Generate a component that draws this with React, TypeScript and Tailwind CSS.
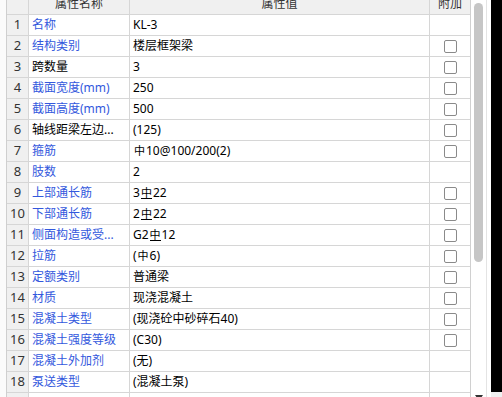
import React from "react";

type Row = { n: number; name: string; value: string; blue: boolean; check: boolean };

const rows: Row[] = [
  { n: 1, name: "名称", value: "KL-3", blue: true, check: false },
  { n: 2, name: "结构类别", value: "楼层框架梁", blue: true, check: true },
  { n: 3, name: "跨数量", value: "3", blue: false, check: true },
  { n: 4, name: "截面宽度(mm)", value: "250", blue: true, check: true },
  { n: 5, name: "截面高度(mm)", value: "500", blue: true, check: true },
  { n: 6, name: "轴线距梁左边...", value: "(125)", blue: false, check: true },
  { n: 7, name: "箍筋", value: "{A}10@100/200(2)", blue: true, check: true },
  { n: 8, name: "肢数", value: "2", blue: true, check: false },
  { n: 9, name: "上部通长筋", value: "3{C}22", blue: true, check: true },
  { n: 10, name: "下部通长筋", value: "2{C}22", blue: true, check: true },
  { n: 11, name: "侧面构造或受...", value: "G2{C}12", blue: true, check: true },
  { n: 12, name: "拉筋", value: "({A}6)", blue: true, check: true },
  { n: 13, name: "定额类别", value: "普通梁", blue: true, check: true },
  { n: 14, name: "材质", value: "现浇混凝土", blue: true, check: true },
  { n: 15, name: "混凝土类型", value: "(现浇砼中砂碎石40)", blue: true, check: true },
  { n: 16, name: "混凝土强度等级", value: "(C30)", blue: true, check: true },
  { n: 17, name: "混凝土外加剂", value: "(无)", blue: true, check: false },
  { n: 18, name: "泵送类型", value: "(混凝土泵)", blue: true, check: false },
];

// rebar grade symbols: A = HPB300, C = HRB400
function Value({ text }: { text: string }) {
  const parts = text.split(/(\{A\}|\{C\})/).filter(Boolean);
  return (
    <span className="whitespace-nowrap">
      {parts.map((p, i) => {
        if (p === "{A}") return <span key={i} className="mx-[1px] text-[11px]">中</span>;
        if (p === "{C}")
          return (
            <span key={i} className="mx-[1px] inline-block text-[11px] leading-[11px] border-b border-black">
              中
            </span>
          );
        return <span key={i}>{p}</span>;
      })}
    </span>
  );
}

function Checkbox() {
  return <div className="w-[13px] h-[13px] rounded-[2px] border border-[#8a8a8a] bg-white" />;
}

export default function App() {
  return (
    <div className="w-[502px] h-[397px] overflow-hidden flex bg-white text-[12px] text-black font-['Noto_Sans','Noto_Sans_CJK_SC',sans-serif]">
      {/* left strip */}
      <div className="w-[7px] h-full border-r border-[#cfcfcf] bg-[#fbfbfb]" />

      {/* grid */}
      <div className="w-[463px] h-full flex flex-col overflow-hidden">
        <div className="h-[15px] shrink-0 flex border-b border-[#d6d6d6] bg-[#f0f0f0] text-[#333] overflow-hidden">
          <div className="w-[22px] border-r border-[#d6d6d6]" />
          <div className="w-[101px] border-r border-[#d6d6d6] flex justify-center leading-[14px]">
            <span className="-translate-y-[3px]">属性名称</span>
          </div>
          <div className="w-[300px] border-r border-[#d6d6d6] flex justify-center leading-[14px]">
            <span className="-translate-y-[3px]">属性值</span>
          </div>
          <div className="w-[40px] flex justify-center leading-[14px]">
            <span className="-translate-y-[3px]">附加</span>
          </div>
        </div>

        {[...rows, { n: 19, name: "", value: "", blue: false, check: false }].map((r) => (
          <div key={r.n} className="h-[21px] shrink-0 flex border-b border-[#d6d6d6]">
            <div className="w-[22px] border-r border-[#d6d6d6] bg-[#f0f0f0] flex items-center justify-center text-[13px] text-[#333]">
              {r.n <= 18 ? r.n : ""}
            </div>
            <div
              className={
                "w-[101px] border-r border-[#d6d6d6] flex items-center pl-[3px] whitespace-nowrap overflow-hidden " +
                (r.blue ? "text-[#3358dd]" : "text-black")
              }
            >
              {r.name}
            </div>
            <div className="w-[300px] border-r border-[#d6d6d6] flex items-center pl-[3px]">
              <Value text={r.value} />
            </div>
            <div className="w-[40px] flex items-center justify-center">{r.check && <Checkbox />}</div>
          </div>
        ))}
      </div>

      {/* vertical scrollbar */}
      <div className="w-[17px] h-full border-l border-r border-l-[#d0d0d0] border-r-[#e4e4e4] flex flex-col items-center justify-between">
        <div className="mt-[3px] w-[9px] h-[259px] rounded-full bg-[#c6c6c6]" />
        <div className="h-[2px] overflow-hidden">
          <svg width="8" height="6" viewBox="0 0 8 6" className="block">
            <path d="M0 0H8L4 6Z" fill="#333" />
          </svg>
        </div>
      </div>

      <div className="w-[4px] h-full bg-white" />

      <div className="w-[11px] h-full flex flex-col">
        <div className="h-[392px] bg-black" />
        <div className="flex-1 bg-[#f0f0f0]" />
      </div>
    </div>
  );
}
